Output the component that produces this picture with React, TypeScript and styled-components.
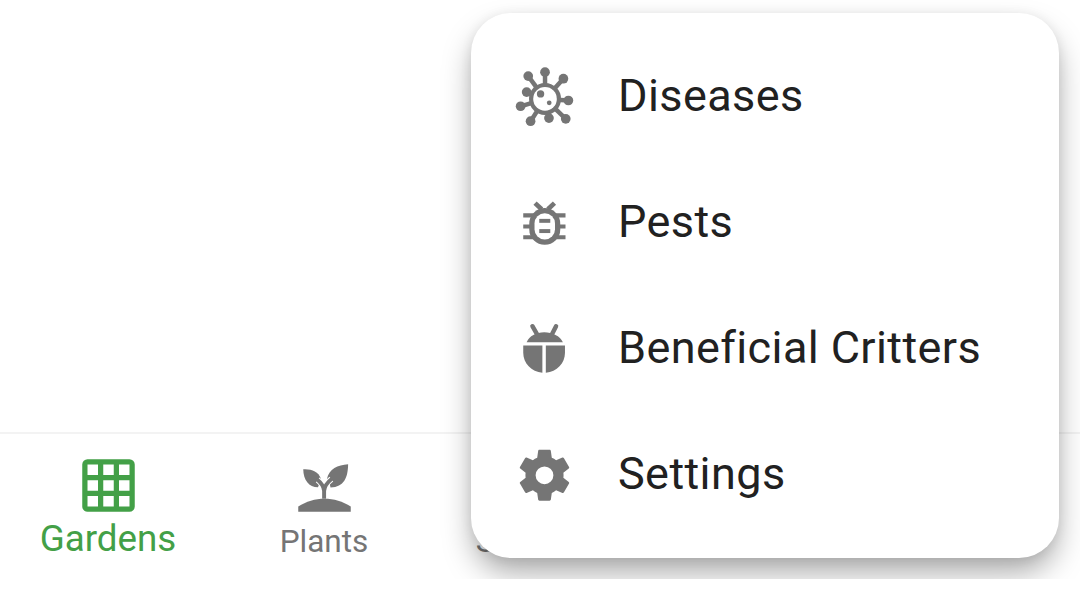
import React from "react";
import styled, { createGlobalStyle } from "styled-components";

const Global = createGlobalStyle`
  html, body { margin: 0; padding: 0; background: #fff; }
  body { font-family: Roboto, "Liberation Sans", sans-serif; }
  #root { height: 589px; }
`;

const Screen = styled.div`
  position: relative;
  width: 1080px;
  height: 579px;
  overflow: hidden;
  background: #fff;
  display: flex;
  flex-direction: column;
  justify-content: flex-end;
`;

const Nav = styled.nav`
  box-sizing: border-box;
  height: 147px;
  border-top: 2px solid #f3f3f3;
  display: grid;
  grid-template-columns: repeat(5, 216px);
`;

const Tab = styled.div<{ $active?: boolean }>`
  display: flex;
  flex-direction: column;
  align-items: center;
  padding-top: 20px;
  color: ${(p) => (p.$active ? "#43a047" : "#757575")};
`;

const TabIcon = styled.svg`
  width: 63px;
  height: 63px;
  fill: currentColor;
  flex: none;
`;

const TabLabel = styled.span<{ $active?: boolean }>`
  font-size: ${(p) => (p.$active ? "36.75px" : "31.5px")};
  line-height: 43px;
  margin-top: ${(p) => (p.$active ? "0" : "3px")};
  white-space: nowrap;
`;

const Menu = styled.div`
  position: absolute;
  left: 471px;
  top: 13px;
  width: 588px;
  height: 545px;
  box-sizing: border-box;
  padding: 19px 0 22px;
  background: #fff;
  border-radius: 40px;
  box-shadow: 0 16px 30px -2px rgba(0, 0, 0, 0.34), 0 1px 12px rgba(0, 0, 0, 0.07);
`;

const Item = styled.div`
  height: 126px;
  display: flex;
  align-items: center;
  gap: 43px;
  padding-left: 42px;
  font-size: 45px;
  letter-spacing: 0.4px;
  color: #212121;
`;

const ItemLabel = styled.span`
  margin-left: -1px;
`;

const ItemIcon = styled.svg`
  width: 63px;
  height: 63px;
  flex: none;
  fill: #757575;
  stroke: none;
  overflow: visible;
`;

const GardensIcon = () => (
  <TabIcon viewBox="0 0 24 24">
    <path d="M10,4V8H14V4H10M16,4V8H20V4H16M16,10V14H20V10H16M16,16V20H20V16H16M14,20V16H10V20H14M8,20V16H4V20H8M8,14V10H4V14H8M8,8V4H4V8H8M10,14H14V10H10V14M4,2H20A2,2 0 0,1 22,4V20A2,2 0 0,1 20,22H4C2.92,22 2,21.1 2,20V4A2,2 0 0,1 4,2Z" />
  </TabIcon>
);

const PlantsIcon = () => (
  <TabIcon viewBox="0 0 24 24">
    <path d="M2 22V20C5 18 8.5 17 12 17C15.5 17 19 18 22 20V22Z" />
    <path d="M3.9 5.8C7 5.6 9.6 6.6 10.6 9.3C10.4 10.5 10 11.5 9.5 12.7C6 12.6 4 10 3.9 5.8Z" />
    <path d="M21 3.9C20.9 9 19.5 12.5 14.3 12.8C14 11 13.6 10.2 12.9 9.6C13.8 5.6 17 4.2 21 3.9Z" />
    <path
      d="M11.85 14C11.7 12.4 10.8 11 9.4 9.9M11.85 14C12 12.4 12.8 11 14.6 9.6"
      fill="none"
      stroke="#fff"
      strokeWidth="2.3"
    />
    <path
      d="M11.85 17V14C11.7 12.4 10.8 11 9.2 9.7M11.85 14C12 12.4 12.8 11 14.8 9.4"
      fill="none"
      stroke="currentColor"
      strokeWidth="1.5"
    />
  </TabIcon>
);

const CalendarIcon = () => (
  <TabIcon viewBox="0 0 24 24">
    <path d="M19 4H18V2H16V4H8V2H6V4H5C3.9 4 3 4.9 3 6V20C3 21.1 3.9 22 5 22H19C20.1 22 21 21.1 21 20V6C21 4.9 20.1 4 19 4ZM19 20H5V9H19V20Z" />
  </TabIcon>
);

const blobs: [number, number][] = [
  [12.2, 3.1],
  [19.2, 5.6],
  [21.1, 13.9],
  [20.1, 20.9],
  [13.7, 20.6],
  [6.7, 21.8],
  [2.9, 16.1],
  [5.2, 10.7],
  [5.8, 4.6],
];

const VirusIcon = () => (
  <ItemIcon viewBox="0 0 24 24">
    {blobs.map(([x, y]) => (
      <g key={`${x}-${y}`}>
        <line x1="12.2" y1="13.3" x2={x} y2={y} stroke="#757575" strokeWidth="1.7" />
        <circle cx={x} cy={y} r="1.85" />
      </g>
    ))}
    <circle cx="12.2" cy="13.3" r="6.1" />
    <circle cx="12.2" cy="13.3" r="4.5" fill="#fff" />
    <circle cx="10.5" cy="11.4" r="1.4" />
    <circle cx="13.8" cy="14.8" r="0.9" />
  </ItemIcon>
);

const PestIcon = () => (
  <ItemIcon viewBox="0 0 24 24">
    <g stroke="#757575" strokeWidth="1.6" fill="none">
      <path d="M8.4 5L10.9 7.3" strokeWidth="1.8" />
      <path d="M15.8 5L13.3 7.3" strokeWidth="1.8" />
      <path d="M3.9 9.7H20M3.9 13.9H20M3.9 18H20" />
    </g>
    <rect x="6.2" y="6.9" width="11.8" height="14" rx="5.9" />
    <rect x="8.2" y="8.9" width="7.8" height="10" rx="3.9" fill="#fff" />
    <rect x="10" y="11" width="4.2" height="1.5" />
    <rect x="10" y="14.9" width="4.2" height="1.5" />
  </ItemIcon>
);

const LadybugIcon = () => (
  <ItemIcon viewBox="0 0 24 24">
    <path
      d="M7.4 3.9L9.3 7.2M16.4 3.9L14.7 7.2"
      stroke="#757575"
      strokeWidth="1.7"
      strokeLinecap="round"
      fill="none"
    />
    <path d="M5.2 10C6.2 7.6 8.8 6.2 11.9 6.2C15 6.2 17.9 7.6 19 10Z" />
    <path d="M3.9 11.2H11.2V21.6C7 21.3 3.9 18 3.9 14Z" />
    <path d="M12.5 11.2H19.8V14C19.8 18 16.7 21.3 12.5 21.6Z" />
  </ItemIcon>
);

const GearIcon = () => (
  <ItemIcon viewBox="-0.4 -1.1 24.8 24.8">
    <path d="M12,15.5A3.5,3.5 0 0,1 8.5,12A3.5,3.5 0 0,1 12,8.5A3.5,3.5 0 0,1 15.5,12A3.5,3.5 0 0,1 12,15.5M19.43,12.97C19.47,12.65 19.5,12.33 19.5,12C19.5,11.67 19.47,11.34 19.43,11L21.54,9.37C21.73,9.22 21.78,8.95 21.66,8.73L19.66,5.27C19.54,5.05 19.27,4.96 19.05,5.05L16.56,6.05C16.04,5.66 15.5,5.32 14.87,5.07L14.5,2.42C14.46,2.18 14.25,2 14,2H10C9.75,2 9.54,2.18 9.5,2.42L9.13,5.07C8.5,5.32 7.96,5.66 7.44,6.05L4.95,5.05C4.73,4.96 4.46,5.05 4.34,5.27L2.34,8.73C2.21,8.95 2.27,9.22 2.46,9.37L4.57,11C4.53,11.34 4.5,11.67 4.5,12C4.5,12.33 4.53,12.65 4.57,12.97L2.46,14.63C2.27,14.78 2.21,15.05 2.34,15.27L4.34,18.73C4.46,18.95 4.73,19.03 4.95,18.95L7.44,17.94C7.96,18.34 8.5,18.68 9.13,18.93L9.5,21.58C9.54,21.82 9.75,22 10,22H14C14.25,22 14.46,21.82 14.5,21.58L14.87,18.93C15.5,18.67 16.04,18.34 16.56,17.94L19.05,18.95C19.27,19.03 19.54,18.95 19.66,18.73L21.66,15.27C21.78,15.05 21.73,14.78 21.54,14.63L19.43,12.97Z" />
  </ItemIcon>
);

const menuItems = [
  { label: "Diseases", icon: <VirusIcon /> },
  { label: "Pests", icon: <PestIcon /> },
  { label: "Beneficial Critters", icon: <LadybugIcon /> },
  { label: "Settings", icon: <GearIcon /> },
];

export default function App() {
  return (
    <>
      <Global />
      <Screen>
        <Nav>
          <Tab $active>
            <GardensIcon />
            <TabLabel $active>Gardens</TabLabel>
          </Tab>
          <Tab>
            <PlantsIcon />
            <TabLabel>Plants</TabLabel>
          </Tab>
          <Tab>
            <CalendarIcon />
            <TabLabel>Schedule</TabLabel>
          </Tab>
        </Nav>
        <Menu>
          {menuItems.map((m) => (
            <Item key={m.label}>
              {m.icon}
              <ItemLabel>{m.label}</ItemLabel>
            </Item>
          ))}
        </Menu>
      </Screen>
    </>
  );
}
